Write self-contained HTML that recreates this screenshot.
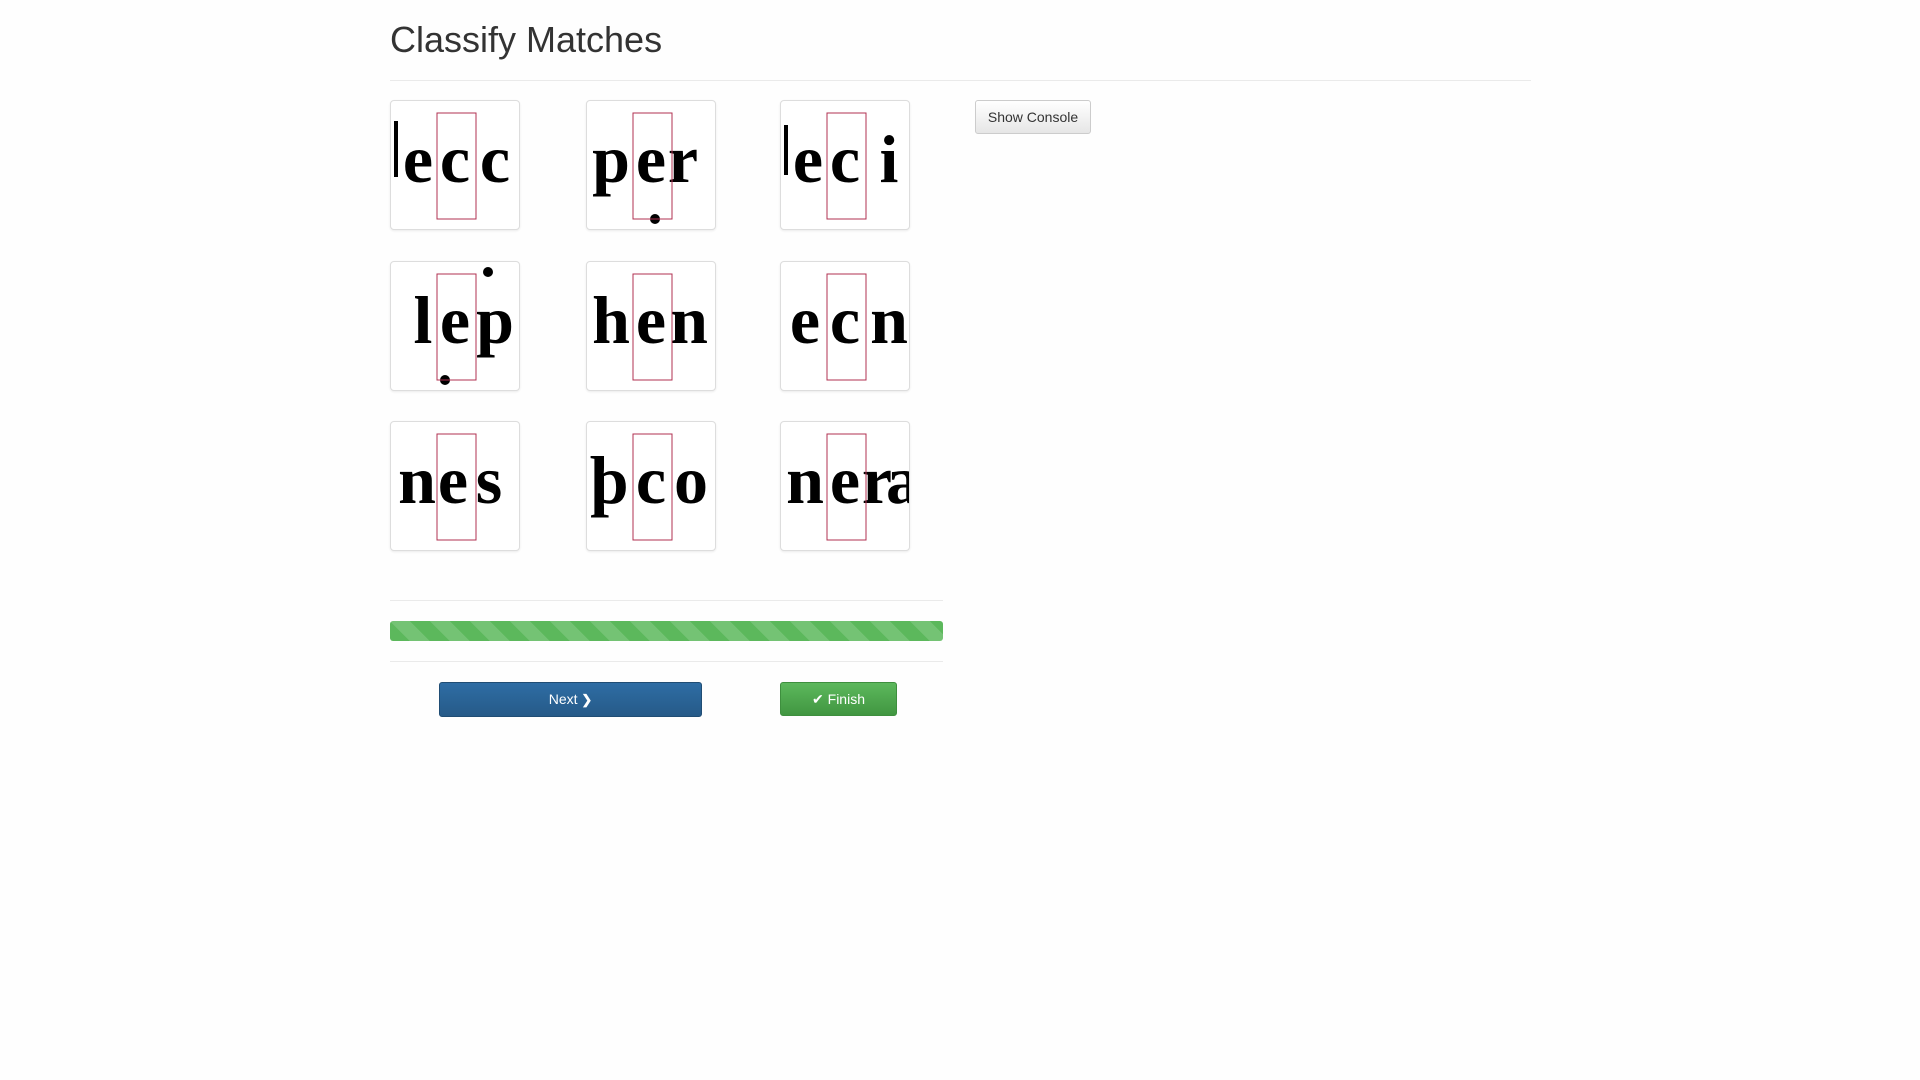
<!DOCTYPE html>
<html><head><meta charset="utf-8"><style>
html,body{margin:0;padding:0;background:#fefefe;width:1920px;height:1080px;overflow:hidden;font-family:"Liberation Sans",sans-serif;}
h1{position:absolute;left:390px;top:19px;margin:0;font-weight:400;font-size:36px;color:#333;}
.hr{position:absolute;height:1px;background:#eaeaea;}
.tile{position:absolute;width:128px;height:128px;border:1px solid #ddd;border-radius:4px;background:#fff;box-shadow:0 1px 2px rgba(0,0,0,.08);overflow:hidden;}
.tile svg{position:absolute;left:0;top:0}
.btn{position:absolute;box-sizing:border-box;border-radius:3px;font-size:14px;text-align:center;}
</style></head><body>
<h1>Classify Matches</h1>
<div class="hr" style="left:390px;top:80px;width:1141px"></div>

<div class="tile" style="left:390px;top:100px"><svg width="128" height="128" font-family="Liberation Serif" font-weight="bold" font-size="68" text-anchor="middle"><rect x="3" y="20" width="4" height="56"/><text x="27" y="81">e</text><text x="64" y="81">c</text><text x="104" y="81">c</text><rect x="46" y="12" width="39" height="106" fill="none" stroke="#b03050" stroke-width="1"/></svg></div>
<div class="tile" style="left:586px;top:100px"><svg width="128" height="128" font-family="Liberation Serif" font-weight="bold" font-size="68" text-anchor="middle"><text x="24" y="81">p</text><text x="64" y="81">e</text><text x="96" y="81">r</text><circle cx="68" cy="118" r="5"/><rect x="46" y="12" width="39" height="106" fill="none" stroke="#b03050"/></svg></div>
<div class="tile" style="left:780px;top:100px"><svg width="128" height="128" font-family="Liberation Serif" font-weight="bold" font-size="68" text-anchor="middle"><rect x="3" y="24" width="4" height="50"/><text x="27" y="81">e</text><text x="64" y="81">c</text><text x="108" y="81">i</text><rect x="46" y="12" width="39" height="106" fill="none" stroke="#b03050"/></svg></div>

<div class="tile" style="left:390px;top:261px"><svg width="128" height="128" font-family="Liberation Serif" font-weight="bold" font-size="68" text-anchor="middle"><text x="32" y="81">l</text><text x="64" y="81">e</text><text x="104" y="81">p</text><circle cx="97" cy="10" r="5"/><circle cx="54" cy="118" r="5"/><rect x="46" y="12" width="39" height="106" fill="none" stroke="#b03050"/></svg></div>
<div class="tile" style="left:586px;top:261px"><svg width="128" height="128" font-family="Liberation Serif" font-weight="bold" font-size="68" text-anchor="middle"><text x="24" y="81">h</text><text x="64" y="81">e</text><text x="102" y="81">n</text><rect x="46" y="12" width="39" height="106" fill="none" stroke="#b03050"/></svg></div>
<div class="tile" style="left:780px;top:261px"><svg width="128" height="128" font-family="Liberation Serif" font-weight="bold" font-size="68" text-anchor="middle"><text x="24" y="81">e</text><text x="64" y="81">c</text><text x="108" y="81">n</text><rect x="46" y="12" width="39" height="106" fill="none" stroke="#b03050"/></svg></div>

<div class="tile" style="left:390px;top:421px"><svg width="128" height="128" font-family="Liberation Serif" font-weight="bold" font-size="68" text-anchor="middle"><text x="26" y="81">n</text><text x="62" y="81">e</text><text x="98" y="81">s</text><rect x="46" y="12" width="39" height="106" fill="none" stroke="#b03050"/></svg></div>
<div class="tile" style="left:586px;top:421px"><svg width="128" height="128" font-family="Liberation Serif" font-weight="bold" font-size="68" text-anchor="middle"><text x="22" y="81">þ</text><text x="64" y="81">c</text><text x="104" y="81">o</text><rect x="46" y="12" width="39" height="106" fill="none" stroke="#b03050"/></svg></div>
<div class="tile" style="left:780px;top:421px"><svg width="128" height="128" font-family="Liberation Serif" font-weight="bold" font-size="68" text-anchor="middle"><text x="24" y="81">n</text><text x="64" y="81">e</text><text x="96" y="81">r</text><text x="122" y="81">a</text><rect x="46" y="12" width="39" height="106" fill="none" stroke="#b03050"/></svg></div>

<div class="btn" style="left:975px;top:100px;width:116px;height:34px;line-height:32px;border:1px solid #ccc;background:linear-gradient(#fff,#e6e6e6);color:#333;">Show Console</div>

<div class="hr" style="left:390px;top:600px;width:553px"></div>
<div style="position:absolute;left:390px;top:621px;width:553px;height:20px;border-radius:3px;background-color:#5cb85c;background-image:linear-gradient(45deg,rgba(255,255,255,.15) 25%,transparent 25%,transparent 50%,rgba(255,255,255,.15) 50%,rgba(255,255,255,.15) 75%,transparent 75%,transparent);background-size:40px 40px;"></div>
<div class="hr" style="left:390px;top:661px;width:553px"></div>

<div class="btn" style="left:439px;top:682px;width:263px;height:35px;line-height:33px;border:1px solid #204d74;background:linear-gradient(#2e6da4,#265a88);color:#fff;">Next <b style="font-size:13px">&#x276F;</b></div>
<div class="btn" style="left:780px;top:682px;width:117px;height:34px;line-height:32px;border:1px solid #3e8f3e;background:linear-gradient(#5cb85c,#419641);color:#fff;">&#x2714; Finish</div>
</body></html>
